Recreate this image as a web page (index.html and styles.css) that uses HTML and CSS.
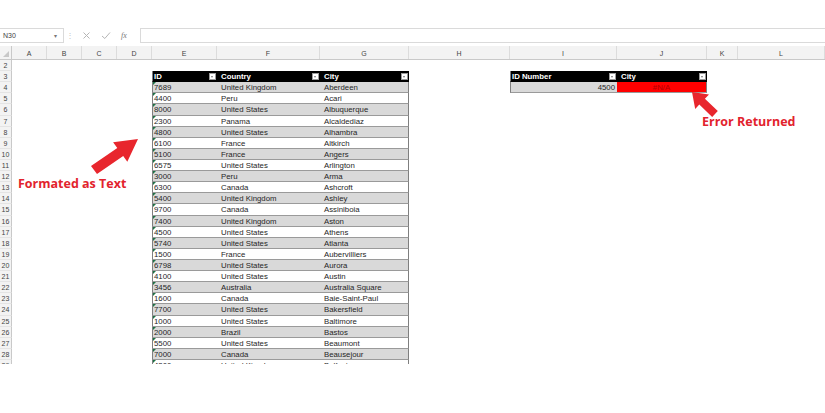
FILE: index.html
```html
<!DOCTYPE html>
<html>
<head>
<meta charset="utf-8">
<link rel="stylesheet" href="styles.css">
</head>
<body>
<div class="page">
  <div class="fbar">
    <div class="namebox"><span>N30</span><span class="dd">▾</span></div>
    <div class="sep">⋮</div>
    <div class="fbtns">
      <svg class="ic" width="9" height="9" viewBox="0 0 9 9"><path d="M1.5 1.5 L7.5 7.5 M7.5 1.5 L1.5 7.5" stroke="#b5b5b5" stroke-width="1" fill="none"/></svg>
      <svg class="ic" width="10" height="9" viewBox="0 0 10 9"><path d="M1 5 L3.8 7.5 L9 1.5" stroke="#b5b5b5" stroke-width="1" fill="none"/></svg>
      <span class="fx">fx</span>
    </div>
    <div class="finput"></div>
  </div>

  <div class="sheet">
    <div class="colhead">
      <div class="corner"><span class="tri"></span></div><div>A</div><div>B</div><div>C</div><div>D</div><div>E</div><div>F</div><div>G</div><div>H</div><div>I</div><div>J</div><div>K</div><div>L</div>
    </div>
    <div class="row"><div class="rh">2</div></div>
    <div class="row"><div class="rh">3</div><div></div><div class="c hd id0">ID<span class="fb"></span></div><div class="c hd">Country<span class="fb"></span></div><div class="c hd">City<span class="fb"></span></div><div></div><div class="c hd id0">ID Number<span class="fb"></span></div><div class="c hd">City<span class="fb"></span></div></div>
    <div class="row"><div class="rh">4</div><div></div><div class="c g id">7689</div><div class="c g">United Kingdom</div><div class="c g last">Aberdeen</div><div></div><div class="c g num id0">4500</div><div class="c err last">#N/A</div></div>
    <div class="row"><div class="rh">5</div><div></div><div class="c id">4400</div><div class="c">Peru</div><div class="c last">Acari</div></div>
    <div class="row"><div class="rh">6</div><div></div><div class="c g id">8000</div><div class="c g">United States</div><div class="c g last">Albuquerque</div></div>
    <div class="row"><div class="rh">7</div><div></div><div class="c id">2300</div><div class="c">Panama</div><div class="c last">Alcaldediaz</div></div>
    <div class="row"><div class="rh">8</div><div></div><div class="c g id">4800</div><div class="c g">United States</div><div class="c g last">Alhambra</div></div>
    <div class="row"><div class="rh">9</div><div></div><div class="c id">6100</div><div class="c">France</div><div class="c last">Altkirch</div></div>
    <div class="row"><div class="rh">10</div><div></div><div class="c g id">5100</div><div class="c g">France</div><div class="c g last">Angers</div></div>
    <div class="row"><div class="rh">11</div><div></div><div class="c id">6575</div><div class="c">United States</div><div class="c last">Arlington</div></div>
    <div class="row"><div class="rh">12</div><div></div><div class="c g id">3000</div><div class="c g">Peru</div><div class="c g last">Arma</div></div>
    <div class="row"><div class="rh">13</div><div></div><div class="c id">6300</div><div class="c">Canada</div><div class="c last">Ashcroft</div></div>
    <div class="row"><div class="rh">14</div><div></div><div class="c g id">5400</div><div class="c g">United Kingdom</div><div class="c g last">Ashley</div></div>
    <div class="row"><div class="rh">15</div><div></div><div class="c id">9700</div><div class="c">Canada</div><div class="c last">Assiniboia</div></div>
    <div class="row"><div class="rh">16</div><div></div><div class="c g id">7400</div><div class="c g">United Kingdom</div><div class="c g last">Aston</div></div>
    <div class="row"><div class="rh">17</div><div></div><div class="c id">4500</div><div class="c">United States</div><div class="c last">Athens</div></div>
    <div class="row"><div class="rh">18</div><div></div><div class="c g id">5740</div><div class="c g">United States</div><div class="c g last">Atlanta</div></div>
    <div class="row"><div class="rh">19</div><div></div><div class="c id">1500</div><div class="c">France</div><div class="c last">Aubervilliers</div></div>
    <div class="row"><div class="rh">20</div><div></div><div class="c g id">6798</div><div class="c g">United States</div><div class="c g last">Aurora</div></div>
    <div class="row"><div class="rh">21</div><div></div><div class="c id">4100</div><div class="c">United States</div><div class="c last">Austin</div></div>
    <div class="row"><div class="rh">22</div><div></div><div class="c g id">3456</div><div class="c g">Australia</div><div class="c g last">Australia Square</div></div>
    <div class="row"><div class="rh">23</div><div></div><div class="c id">1600</div><div class="c">Canada</div><div class="c last">Baie-Saint-Paul</div></div>
    <div class="row"><div class="rh">24</div><div></div><div class="c g id">7700</div><div class="c g">United States</div><div class="c g last">Bakersfield</div></div>
    <div class="row"><div class="rh">25</div><div></div><div class="c id">1000</div><div class="c">United States</div><div class="c last">Baltimore</div></div>
    <div class="row"><div class="rh">26</div><div></div><div class="c g id">2000</div><div class="c g">Brazil</div><div class="c g last">Bastos</div></div>
    <div class="row"><div class="rh">27</div><div></div><div class="c id">5500</div><div class="c">United States</div><div class="c last">Beaumont</div></div>
    <div class="row"><div class="rh">28</div><div></div><div class="c g id">7000</div><div class="c g">Canada</div><div class="c g last">Beausejour</div></div>
    <div class="row"><div class="rh">29</div><div></div><div class="c id">4300</div><div class="c">United Kingdom</div><div class="c last">Belfast</div></div>
  </div>

  <svg class="arrows" width="825" height="413" viewBox="0 0 825 413">
    <polygon points="138,139 127.3,161.7 123.2,156.1 97,174 91,166 117.3,148 113.1,142.3" fill="#e8262d"/>
    <polygon points="692,92 709,94.5 704.9,98.8 717.8,111.1 712.2,116.9 699.3,104.6 695.2,108.9" fill="#e8262d"/>
  </svg>
  <div class="note note1">Formated as Text</div>
  <div class="note note2">Error Returned</div>
</div>
</body>
</html>
```

FILE: styles.css
```css
body {
  margin: 0;
  background: #ffffff;
  font-family: "Liberation Sans", Arial, sans-serif;
}

.page {
  position: relative;
  width: 825px;
  height: 413px;
  overflow: hidden;
  background: #ffffff;
}

/* formula bar */
.fbar {
  margin-top: 28px;
  height: 15px;
  display: flex;
  align-items: stretch;
}

.namebox {
  width: 64px;
  box-sizing: border-box;
  border: 1px solid #dadada;
  border-left: none;
  display: flex;
  align-items: center;
  justify-content: space-between;
  padding: 0 6px 0 3px;
  font-size: 7px;
  color: #444;
}

.namebox .dd {
  font-size: 6px;
  color: #777;
}

.sep {
  width: 12px;
  display: flex;
  align-items: center;
  justify-content: center;
  font-size: 8px;
  color: #c4c4c4;
}

.fbtns {
  width: 64px;
  display: flex;
  align-items: center;
  padding-left: 6px;
  gap: 10px;
  box-sizing: border-box;
}

.fx {
  font-family: "Liberation Serif", serif;
  font-style: italic;
  font-size: 8px;
  color: #777;
}

.finput {
  flex: 1;
  border: 1px solid #dadada;
  border-right: none;
}

/* sheet */
.sheet {
  margin-top: 3px;
  height: 318px;
  overflow: hidden;
}

.colhead {
  display: grid;
  grid-template-columns: 12px 35px 35px 35px 35px 65px 103px 89px 101px 107px 90px 31px 1fr;
  height: 14px;
  background: #f3f3f3;
  border-bottom: 1px solid #c9c9c9;
  box-sizing: border-box;
}

.colhead div {
  border-right: 1px solid #dcdcdc;
  font-size: 7px;
  color: #444;
  display: flex;
  align-items: center;
  justify-content: center;
  padding-top: 1px;
}

.colhead .corner {
  position: relative;
  border-right: 1px solid #c9c9c9;
}

.tri {
  position: absolute;
  right: 2px;
  bottom: 2px;
  width: 0;
  height: 0;
  border-left: 6px solid transparent;
  border-bottom: 6px solid #c8c8c8;
}

.row {
  display: grid;
  grid-template-columns: 12px 140px 65px 103px 89px 101px 107px 90px 1fr;
  height: 11.115px;
}

.rh {
  background: #f3f3f3;
  border-right: 1px solid #c9c9c9;
  border-bottom: 1px solid #e4e4e4;
  box-sizing: border-box;
  font-size: 7px;
  color: #444;
  display: flex;
  align-items: center;
  justify-content: center;
  padding-top: 1px;
}

.c {
  font-size: 7.8px;
  color: #262626;
  display: flex;
  align-items: center;
  padding-left: 4px;
  padding-top: 1px;
  border-bottom: 1px solid #9a9a9a;
  box-sizing: border-box;
  white-space: nowrap;
  overflow: hidden;
  background: #ffffff;
}

.g {
  background: #d9d9d9;
}

.id {
  position: relative;
  padding-left: 1px;
  border-left: 1px solid #7f7f7f;
}

.id::before {
  content: "";
  position: absolute;
  left: 0;
  top: 0;
  width: 0;
  height: 0;
  border-top: 3px solid #1e7145;
  border-right: 3px solid transparent;
}

.id0 {
  padding-left: 1px;
  border-left: 1px solid #7f7f7f;
}

.last {
  border-right: 1px solid #7f7f7f;
}

.hd {
  background: #000000;
  color: #ffffff;
  font-weight: bold;
  justify-content: space-between;
  padding-right: 1px;
  border-bottom: 1px solid #000;
}

.fb {
  position: relative;
  width: 7px;
  height: 7px;
  background: #ffffff;
  border: 1px solid #9a9a9a;
  box-sizing: border-box;
}

.fb::after {
  content: "";
  position: absolute;
  left: 1px;
  top: 2px;
  width: 0;
  height: 0;
  border-left: 1.5px solid transparent;
  border-right: 1.5px solid transparent;
  border-top: 2px solid #777;
}

.num {
  justify-content: flex-end;
  padding-right: 2px;
}

.err {
  background: #ff0000;
  color: #b00000;
  justify-content: center;
  padding-left: 0;
}

/* annotations */
.arrows {
  position: absolute;
  left: 0;
  top: 0;
  pointer-events: none;
}

.note {
  position: absolute;
  font-family: "Open Sans", "Liberation Sans", sans-serif;
  font-weight: 700;
  font-size: 12.5px;
  line-height: 14px;
  color: #e2232d;
  white-space: nowrap;
}

.note1 {
  left: 18px;
  top: 177px;
}

.note2 {
  left: 702px;
  top: 115px;
}
```
